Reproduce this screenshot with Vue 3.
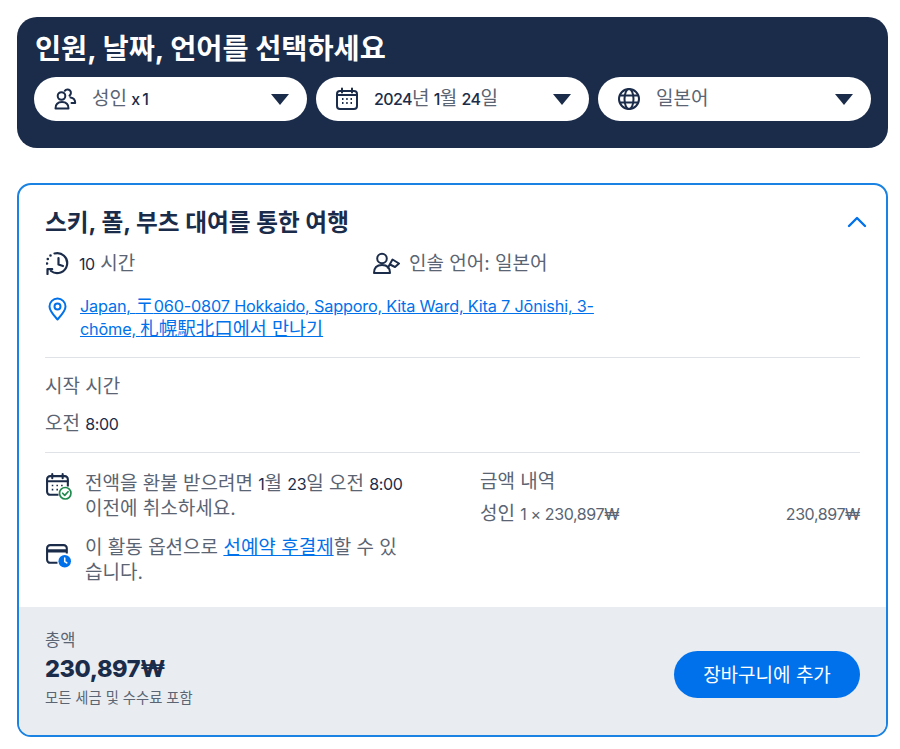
<script setup>
const selects = [
  { id: 'people', parts: [['k', '성인 '], ['l', 'x 1']] },
  { id: 'cal', parts: [['l', '2024'], ['k', '년 '], ['l', '1'], ['k', '월 '], ['l', '24'], ['k', '일']] },
  { id: 'globe', parts: [['k', '일본어']] },
]
</script>

<template>
  <div class="page">
    <section class="picker">
      <h2 class="picker-title">인원, 날짜, 언어를 선택하세요</h2>
      <div class="selects">
        <div v-for="s in selects" :key="s.id" class="select">
          <svg v-if="s.id === 'people'" class="sel-icon" viewBox="0 0 24 24" fill="none" stroke="#1b2c4a" stroke-width="2">
            <circle cx="8.500" cy="9" r="3.800" />
            <path d="M2.500 21.500c0-4 2.500-6.500 6.500-6.500s6.500 2.500 6.500 6.500z" stroke-linejoin="round" />
            <path d="M11.800 3.800a3.400 3.400 0 1 1 4.700 4.800M17.500 10.500c2.800.3 4.700 2.300 4.700 5.500h-3.700" stroke-linecap="round" stroke-linejoin="round" />
          </svg>
          <svg v-else-if="s.id === 'cal'" class="sel-icon" viewBox="0 0 24 24" fill="none" stroke="#1b2c4a" stroke-width="2">
            <rect x="2" y="4" width="20" height="18" rx="3" />
            <path d="M7 1.500v4M17 1.500v4M2 8h20" stroke-linecap="round" />
            <path d="M7 12h1.500M11.200 12h1.500M15.500 12h1.500M7 16h1.500M11.200 16h1.500M15.500 16h1.500" stroke-width="1.800" />
          </svg>
          <svg v-else class="sel-icon" viewBox="0 0 24 24" fill="none" stroke="#1b2c4a" stroke-width="2">
            <circle cx="12" cy="12" r="10" />
            <ellipse cx="12" cy="12" rx="4.500" ry="10" />
            <path d="M2.800 8.500h18.400M2.800 15.500h18.400" />
          </svg>
          <span class="sel-text">
            <span v-for="(p, i) in s.parts" :key="i" :class="p[0] === 'l' ? 'latin' : 'kor'">{{ p[1] }}</span>
          </span>
          <svg class="caret" viewBox="0 0 18 11"><path d="M0 0h18L9 11z" fill="#1b2c4a" /></svg>
        </div>
      </div>
    </section>

    <section class="card">
      <div class="card-body">
        <div class="card-head">
          <h3 class="card-title">스키, 폴, 부츠 대여를 통한 여행</h3>
          <svg class="chev" viewBox="0 0 20 12" fill="none" stroke="#0071eb" stroke-width="2.400" stroke-linecap="round" stroke-linejoin="round"><path d="M2 10l8-8 8 8" /></svg>
        </div>

        <div class="facts">
          <div class="fact">
            <svg class="ic" viewBox="0 0 24 24" fill="none" stroke="#1b2c4a" stroke-width="2.200" stroke-linecap="round" stroke-linejoin="round">
              <path d="M8.500 2.500A10 10 0 1 1 5 20" />
              <path d="M12.500 7v6.500l4.500 1.500" />
              <path d="M1.500 23v-4.800H6.200" />
              <path d="M4.500 4.500h.01M1.800 8h.01M1 12.500h.01" stroke-width="2.600" />
            </svg>
            <span class="t"><span class="latin dark">10</span> 시간</span>
          </div>
          <div class="fact fact-lang">
            <svg class="ic lang-ic" viewBox="0 0 27 24" fill="none" stroke="#1b2c4a" stroke-width="2" stroke-linejoin="round">
              <circle cx="9" cy="7.500" r="4.800" />
              <path d="M1 22c0-5.500 3-8 8-8s8 2.500 8 8z" />
              <path d="M14.500 17.500L19.500 8.500l6.500 4-4 3.500-5-2.500" />
            </svg>
            <span class="t">인솔 언어: 일본어</span>
          </div>
        </div>

        <div class="address">
          <svg class="pin" viewBox="0 0 20 24" fill="none" stroke="#0071eb" stroke-width="2">
            <path d="M10 22.500C6 18 2 14 2 9.500a8 8 0 0 1 16 0c0 4.500-4 8.500-8 13z" stroke-linejoin="round" />
            <circle cx="10" cy="9.500" r="3" />
          </svg>
          <a class="addr-link" href="#">Japan, <span class="cjk">〒</span>060-0807 Hokkaido, Sapporo, Kita Ward, Kita 7 Jōnishi, 3-chōme, <span class="cjk">札幌駅北口에서 만나기</span></a>
        </div>

        <hr class="rule rule-a" />

        <div class="start-label">시작 시간</div>
        <div class="start-time">오전 <span class="latin dark">8:00</span></div>

        <hr class="rule rule-b" />

        <div class="details">
          <div class="policy">
            <div class="policy-row">
              <svg class="pol-ic" viewBox="0 0 26 26" fill="none" stroke="#1b2c4a" stroke-width="2">
                <path d="M13 21H5a3 3 0 0 1-3-3V6a3 3 0 0 1 3-3h14a3 3 0 0 1 3 3v7" />
                <path d="M7 1v4M17 1v4M2 8h20" stroke-linecap="round" />
                <path d="M6.500 12h1.500M11 12h1.500M15.500 12h1.500M6.500 16h1.500M11 16h1.500" stroke-width="1.600" />
                <circle cx="19.500" cy="19.500" r="5.500" stroke="#1f8a4d" stroke-width="1.600" fill="#fff" />
                <path d="M17 19.500l2 2 3.200-3.500" stroke="#1f8a4d" stroke-width="1.600" stroke-linecap="round" stroke-linejoin="round" />
              </svg>
              <p class="pol-text">전액을 환불 받으려면 <span class="latin dark">1</span>월 <span class="latin dark">23</span>일 오전 <span class="latin dark">8:00</span> 이전에 취소하세요.</p>
            </div>
            <div class="policy-row second">
              <svg class="pol-ic" viewBox="0 0 26 26" fill="none" stroke="#1b2c4a" stroke-width="2">
                <path d="M12 21H5a3 3 0 0 1-3-3V7a3 3 0 0 1 3-3h13a3 3 0 0 1 3 3v5" />
                <path d="M2 9.500h19" stroke-width="3" />
                <circle cx="19" cy="19.500" r="6" fill="#0071eb" stroke="none" />
                <path d="M19 16.500v3.200l2 1.300" stroke="#fff" stroke-width="1.500" stroke-linecap="round" />
              </svg>
              <p class="pol-text">이 활동 옵션으로 <a class="pol-link" href="#">선예약 후결제</a>할 수 있습니다.</p>
            </div>
          </div>
          <div class="price">
            <div class="price-label">금액 내역</div>
            <div class="price-row">
              <span>성인 <span class="latin">1 × 230,897₩</span></span>
              <span class="latin">230,897₩</span>
            </div>
          </div>
        </div>
      </div>

      <footer class="total">
        <div class="total-info">
          <div class="total-label">총액</div>
          <div class="total-price">230,897₩</div>
          <div class="total-note">모든 세금 및 수수료 포함</div>
        </div>
        <button class="cart" type="button">장바구니에 추가</button>
      </footer>
    </section>
  </div>
</template>

<style>
html, body { margin: 0; background: #fff; }
</style>

<style scoped>
.page {
  width: 900px;
  box-sizing: border-box;
  padding: 17px 12px 0 17px;
  font-family: Inter, "Noto Sans CJK KR", sans-serif;
  color: #5a6472;
  font-size: 19px;
}
.latin { font-size: 16px; letter-spacing: -0.4px; }
.dark { color: #1b2c4a; }
.picker {
  background: #1b2c4a;
  border-radius: 20px;
  height: 131px;
  box-sizing: border-box;
  padding: 15px 18px 0;
}
.picker-title {
  margin: 0;
  font-size: 28.400px;
  line-height: 34px;
  font-weight: 700;
  color: #fff;
}
.selects { display: flex; gap: 9px; margin: 11px -1px 0; }
.select {
  flex: 1;
  height: 44px;
  background: #fff;
  border-radius: 22px;
  display: flex;
  align-items: center;
  padding: 0 18px 0 19px;
}
.sel-icon { width: 24px; height: 24px; flex: none; }
.sel-text { margin-left: 15px; flex: 1; margin-top: -6px; word-spacing: -1px; }
.sel-text .latin { color: #1b2c4a; font-weight: 500; letter-spacing: -0.6px; }
.caret { width: 18px; height: 11px; flex: none; }

.card {
  margin-top: 35px;
  border: 2px solid #1a82e2;
  border-radius: 14px;
  overflow: hidden;
  height: 554px;
  box-sizing: border-box;
  display: flex;
  flex-direction: column;
}
.card-body { flex: 1; padding: 19px 26px 0 26px; }
.card-head { display: flex; justify-content: space-between; align-items: center; height: 34px; }
.card-title { margin: 0; font-size: 23.700px; font-weight: 700; color: #1b2c4a; }
.chev { width: 20px; height: 12px; margin: 2px -7px 0 0; }
.facts { display: flex; margin-top: 10px; }
.fact { display: flex; align-items: center; height: 30px; }
.fact:first-child { width: 327px; }
.fact:first-child .ic { margin-left: 1px; }
.fact-lang { margin-left: 1px; }
.ic { width: 24px; height: 24px; flex: none; }
.lang-ic { width: 27px; }
.t { margin-left: 9px; margin-top: -3px; }
.address { display: flex; margin-top: 16px; gap: 12px; align-items: flex-start; }
.pin { width: 21px; height: 24px; flex: none; margin-top: 3px; margin-left: 2px; }
.addr-link {
  width: 520px;
  color: #0071eb;
  line-height: 22px;
  font-size: 16.300px;
  letter-spacing: -0.2px;
}
.cjk { font-size: 18.500px; letter-spacing: 0; }
.rule { border: 0; border-top: 1px solid #dfe3e8; margin: 0; }
.rule-a { margin-top: 17px; }
.start-label { margin-top: 17px; line-height: 24px; }
.start-time { margin-top: 13px; line-height: 24px; }
.rule-b { margin-top: 16px; }
.details { display: flex; margin-top: 19px; }
.policy { width: 435px; flex: none; }
.policy-row { display: flex; gap: 13px; }
.policy-row.second { margin-top: 15px; }
.pol-ic { width: 27px; height: 27px; flex: none; margin-top: 1px; }
.policy-row.second .pol-ic { margin-top: 5px; }
.pol-text { margin: 0; width: 320px; line-height: 24.500px; }
.pol-link { color: #0071eb; }
.price-label { line-height: 25px; margin-top: -3px; }
.price-row { display: flex; justify-content: space-between; margin-top: 8px; line-height: 24px; width: 380px; }
.total {
  height: 128px;
  flex: none;
  background: #e9edf1;
  display: flex;
  justify-content: space-between;
  align-items: center;
  padding: 0 26px;
}
.total-info { margin-bottom: 4px; }
.total-label { font-size: 16.500px; line-height: 22px; }
.total-price { font-size: 23.500px; font-weight: 800; color: #1b2c4a; line-height: 36px; letter-spacing: -0.4px; }
.total-note { font-size: 14.300px; line-height: 22px; }
.cart {
  width: 186px;
  height: 47px;
  border: 0;
  border-radius: 24px;
  background: #0071eb;
  color: #fff;
  font: inherit;
  font-size: 19px;
  margin-top: 6px;
  padding-bottom: 3px;
}
</style>
